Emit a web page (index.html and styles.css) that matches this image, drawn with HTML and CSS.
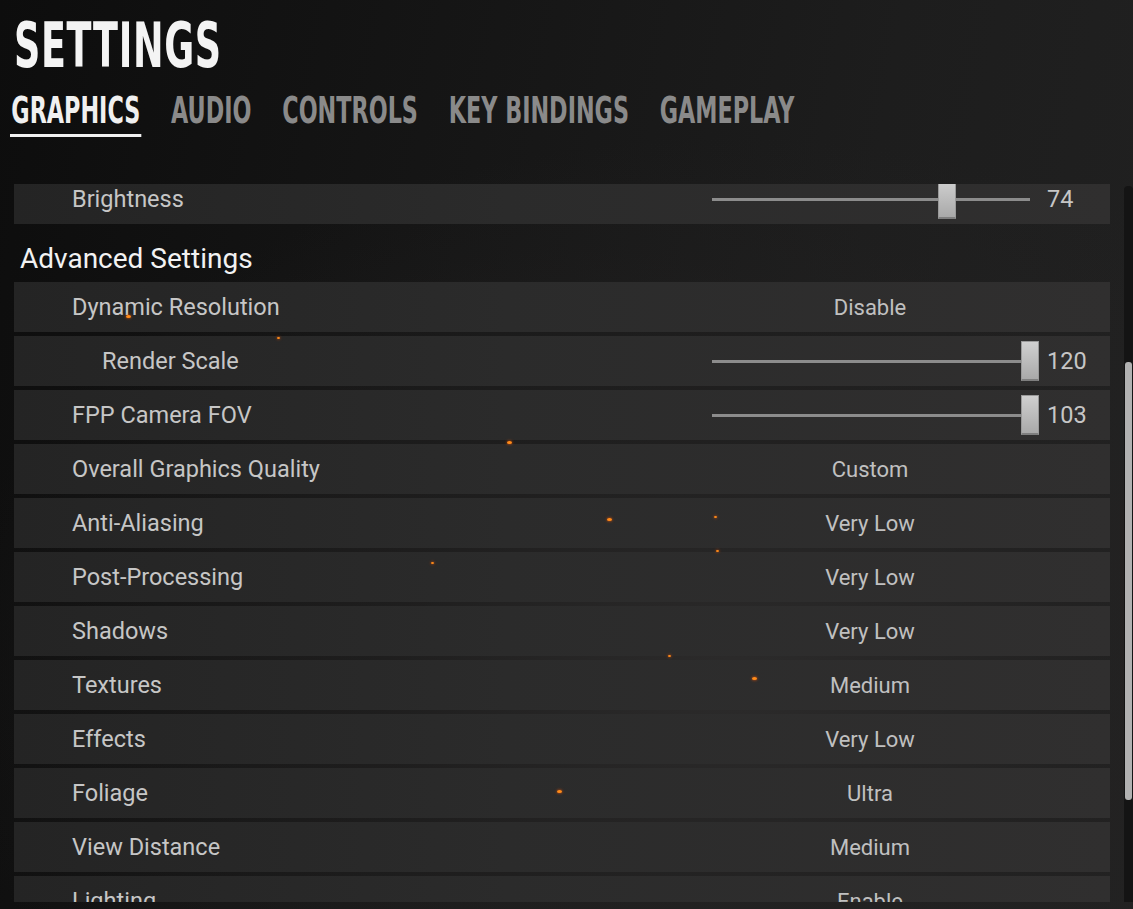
FILE: index.html
```html
<!DOCTYPE html>
<html lang="en">
<head>
    <meta charset="UTF-8">
    <meta name="viewport" content="width=device-width, initial-scale=1.0">
    <title>Settings</title>
    <link rel="stylesheet" href="styles.css">
</head>
<body>
    <div class="page">
        <h1 class="title"><span>SETTINGS</span></h1>

        <nav class="tabs">
            <div class="tab-strip">
                <a class="tab active">GRAPHICS</a>
                <a class="tab">AUDIO</a>
                <a class="tab">CONTROLS</a>
                <a class="tab">KEY BINDINGS</a>
                <a class="tab">GAMEPLAY</a>
            </div>
        </nav>

        <div class="panel">
            <div class="list">
                <div class="row">
                    <span class="label">Brightness</span>
                    <div class="slider">
                        <div class="track"><div class="thumb" style="left: 74%"></div></div>
                        <span class="num">74</span>
                    </div>
                </div>

                <h2 class="section">Advanced Settings</h2>

                <div class="row">
                    <span class="label">Dynamic Resolution</span>
                    <span class="value">Disable</span>
                </div>
                <div class="row">
                    <span class="label sub">Render Scale</span>
                    <div class="slider">
                        <div class="track"><div class="thumb" style="left: 100%"></div></div>
                        <span class="num">120</span>
                    </div>
                </div>
                <div class="row">
                    <span class="label">FPP Camera FOV</span>
                    <div class="slider">
                        <div class="track"><div class="thumb" style="left: 100%"></div></div>
                        <span class="num">103</span>
                    </div>
                </div>
                <div class="row">
                    <span class="label">Overall Graphics Quality</span>
                    <span class="value">Custom</span>
                </div>
                <div class="row">
                    <span class="label">Anti-Aliasing</span>
                    <span class="value">Very Low</span>
                </div>
                <div class="row">
                    <span class="label">Post-Processing</span>
                    <span class="value">Very Low</span>
                </div>
                <div class="row">
                    <span class="label">Shadows</span>
                    <span class="value">Very Low</span>
                </div>
                <div class="row">
                    <span class="label">Textures</span>
                    <span class="value">Medium</span>
                </div>
                <div class="row">
                    <span class="label">Effects</span>
                    <span class="value">Very Low</span>
                </div>
                <div class="row">
                    <span class="label">Foliage</span>
                    <span class="value">Ultra</span>
                </div>
                <div class="row">
                    <span class="label">View Distance</span>
                    <span class="value">Medium</span>
                </div>
                <div class="row">
                    <span class="label">Lighting</span>
                    <span class="value">Enable</span>
                </div>
            </div>

            <div class="scrollbar"><div class="scroll-thumb"></div></div>
        </div>

        <!-- embers floating over the menu -->
        <span class="ember" style="left: 126px; top: 315px"></span>
        <span class="ember small" style="left: 277px; top: 337px"></span>
        <span class="ember" style="left: 507px; top: 441px"></span>
        <span class="ember" style="left: 607px; top: 518px"></span>
        <span class="ember small" style="left: 714px; top: 516px"></span>
        <span class="ember small" style="left: 716px; top: 550px"></span>
        <span class="ember small" style="left: 431px; top: 562px"></span>
        <span class="ember small" style="left: 668px; top: 655px"></span>
        <span class="ember" style="left: 752px; top: 677px"></span>
        <span class="ember" style="left: 557px; top: 790px"></span>
    </div>
</body>
</html>
```

FILE: styles.css
```css
html, body {
    margin: 0;
    height: 100%;
}
body {
    font-family: Roboto, "Noto Sans", sans-serif;
    color: #c4c4c4;
    background: #1b1b1b;
    overflow: hidden;
}
.page {
    position: relative;
    height: 909px;
    background:
        radial-gradient(ellipse 70% 60% at 65% 75%, #2c2b2b 0%, rgba(36,35,35,0.6) 45%, rgba(20,20,20,0) 100%),
        linear-gradient(100deg, #0d0d0d 0%, #141414 30%, #1d1d1d 70%, #212121 100%);
}
.title {
    margin: 0;
    padding: 14px 0 0 14px;
    height: 64px;
    font-family: "DejaVu Sans Condensed", "Liberation Sans Narrow", sans-serif;
    font-weight: bold;
    font-size: 63px;
    line-height: 64px;
    color: #f4f4f4;
}
.title span {
    display: inline-block;
    transform: scaleX(0.645);
    transform-origin: left top;
    letter-spacing: 1px;
}
.tabs {
    padding: 13px 0 0 10px;
    height: 45px;
}
.tab-strip {
    display: flex;
    gap: 42px;
    transform: scaleX(0.67);
    transform-origin: left top;
}
.tab {
    display: inline-block;
    padding: 0 2px;
    font-family: "DejaVu Sans Condensed", "Liberation Sans Narrow", sans-serif;
    font-weight: bold;
    font-size: 37px;
    line-height: 40px;
    color: #8a8a8a;
    height: 46px;
    box-sizing: border-box;
    white-space: nowrap;
}
.tab.active {
    color: #f0f0f0;
    border-bottom: 3px solid #f0f0f0;
}
.panel {
    display: flex;
    margin-top: 48px;
    height: 718px;
}
.list {
    width: 1096px;
    margin-left: 14px;
    overflow: hidden;
    display: flex;
    flex-direction: column;
    gap: 4px;
}
.list > .row:first-child {
    margin-top: -10px;
}
.row {
    flex: none;
    height: 50px;
    display: flex;
    align-items: center;
    background: linear-gradient(90deg, #242424 0%, #2b2b2b 45%, #302f2f 100%);
}
.label {
    flex: none;
    box-sizing: border-box;
    width: 698px;
    padding-left: 58px;
    font-size: 23.5px;
    color: #c6c6c6;
}
.label.sub {
    padding-left: 88px;
}
.value {
    flex: none;
    width: 316px;
    text-align: center;
    font-size: 22px;
    color: #c0c0c0;
}
.slider {
    display: flex;
    align-items: center;
}
.track {
    position: relative;
    width: 318px;
    height: 3px;
    background: #8c8c8c;
}
.thumb {
    position: absolute;
    top: -19px;
    width: 18px;
    height: 40px;
    margin-left: -9px;
    box-sizing: border-box;
    background: linear-gradient(#d0d0d0, #a9a9a9);
    border: 1px solid #9a9a9a;
    border-bottom: 2px solid #7e7e7e;
}
.num {
    margin-left: 17px;
    font-size: 23.5px;
    color: #c6c6c6;
}
.section {
    flex: none;
    margin: 0;
    height: 50px;
    padding-left: 6px;
    font-weight: normal;
    font-size: 28px;
    line-height: 62px;
    color: #f2f2f2;
}
.scrollbar {
    width: 9px;
    margin-left: 14px;
    margin-top: 2px;
    background: #141414;
    border-radius: 4px 4px 0 0;
    position: relative;
}
.scroll-thumb {
    position: absolute;
    top: 176px;
    left: 1px;
    width: 7px;
    height: 438px;
    border-radius: 3px;
    background: #b1b1b1;
}
.ember {
    position: absolute;
    width: 5px;
    height: 3px;
    border-radius: 50%;
    background: #ff8c1a;
    box-shadow: 0 0 3px #ff5a00;
}
.ember.small {
    width: 3px;
    height: 2px;
}
```
